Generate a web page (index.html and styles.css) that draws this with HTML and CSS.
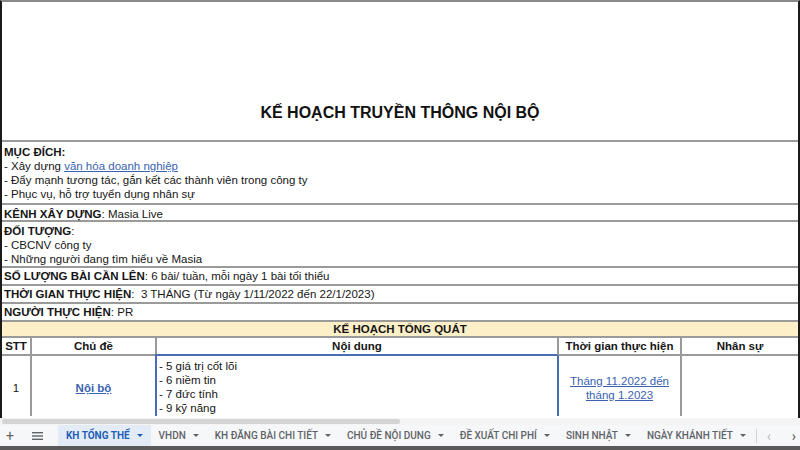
FILE: index.html
```html
<!DOCTYPE html>
<html lang="vi">
<head>
<meta charset="utf-8">
<title>Kế hoạch truyền thông nội bộ</title>
<link rel="stylesheet" href="styles.css">
</head>
<body>
<div class="page">
  <div class="sheet">
    <div class="title">KẾ HOẠCH TRUYỀN THÔNG NỘI BỘ</div>
    <div class="sec purpose">
      <div><b>MỤC ĐÍCH:</b></div>
      <div>- Xây dựng <span class="link">văn hóa doanh nghiệp</span></div>
      <div>- Đẩy mạnh tương tác, gắn kết các thành viên trong công ty</div>
      <div>- Phục vụ, hỗ trợ tuyển dụng nhân sự</div>
    </div>
    <div class="sec single tall"><b>KÊNH XÂY DỰNG</b>: Masia Live</div>
    <div class="sec target">
      <div><b>ĐỐI TƯỢNG</b>:</div>
      <div>- CBCNV công ty</div>
      <div>- Những người đang tìm hiểu về Masia</div>
    </div>
    <div class="sec single"><b>SỐ LƯỢNG BÀI CẦN LÊN</b>: 6 bài/ tuần, mỗi ngày 1 bài tối thiểu</div>
    <div class="sec single"><b>THỜI GIAN THỰC HIỆN</b>:&nbsp; 3 THÁNG (Từ ngày 1/11/2022 đến 22/1/2023)</div>
    <div class="sec single"><b>NGƯỜI THỰC HIỆN</b>: PR</div>
    <div class="sec yellow">KẾ HOẠCH TỔNG QUÁT</div>
    <div class="grid head">
      <div class="cell first">STT</div>
      <div class="cell">Chủ đề</div>
      <div class="cell">Nội dung</div>
      <div class="cell">Thời gian thực hiện</div>
      <div class="cell">Nhân sự</div>
    </div>
    <div class="grid data">
      <div class="cell first center">1</div>
      <div class="cell center"><span class="link bold">Nội bộ</span></div>
      <div class="cell selected">
        <div>- 5 giá trị cốt lõi</div>
        <div>- 6 niềm tin</div>
        <div>- 7 đức tính</div>
        <div>- 9 kỹ năng</div>
      </div>
      <div class="cell center after-sel"><span class="link">Tháng 11.2022 đến<br>tháng 1.2023</span></div>
      <div class="cell"></div>
    </div>
  </div>
  <div class="hscroll"><div class="thumb"></div></div>
  <div class="tabs">
    <span class="tool plus">+</span>
    <span class="tool menu"><svg width="11" height="8" viewBox="0 0 11 8"><rect x="0" y="0" width="11" height="1.4" fill="#5f6368"/><rect x="0" y="3.3" width="11" height="1.4" fill="#5f6368"/><rect x="0" y="6.6" width="11" height="1.4" fill="#5f6368"/></svg></span>
    <span class="tab active">KH TỔNG THỂ<i class="caret"></i></span>
    <span class="tab">VHDN<i class="caret"></i></span>
    <span class="tab">KH ĐĂNG BÀI CHI TIẾT<i class="caret"></i></span>
    <span class="tab">CHỦ ĐỀ NỘI DUNG<i class="caret"></i></span>
    <span class="tab">ĐỀ XUẤT CHI PHÍ<i class="caret"></i></span>
    <span class="tab">SINH NHẬT<i class="caret"></i></span>
    <span class="tab">NGÀY KHÁNH TIẾT<i class="caret"></i></span>
    <span class="divider"></span>
    <span class="nav prev">‹</span>
    <span class="nav next">›</span>
  </div>
  <div class="bottom"></div>
</div>
</body>
</html>
```

FILE: styles.css
```css
html, body {
  margin: 0;
  padding: 0;
  background: #fff;
}
body {
  width: 800px;
  height: 450px;
  overflow: hidden;
  font-family: "Liberation Sans", Arial, sans-serif;
  font-size: 11.5px;
  color: #161616;
}
.page {
  width: 800px;
  height: 450px;
  display: flex;
  flex-direction: column;
}
.sheet {
  height: 418px;
  box-sizing: border-box;
  border-top: 2px solid #8a8a8a;
  border-left: 2px solid #1a1a1a;
  border-right: 2px solid #1a1a1a;
  overflow: hidden;
  flex: none;
}
.title {
  height: 138px;
  box-sizing: border-box;
  padding-top: 101px;
  line-height: 20px;
  font-size: 16px;
  font-weight: bold;
  text-align: center;
  color: #111;
}
.sec {
  border-top: 2px solid #9a9a9a;
  padding: 0 2px;
}
.purpose {
  height: 58px;
  padding-top: 3px;
  line-height: 14px;
}
.single {
  height: 16px;
  line-height: 16px;
}
.single.tall {
  height: 14px;
  padding-top: 1px;
  line-height: 16px;
}
.target {
  height: 42px;
  padding-top: 2px;
  line-height: 14px;
}
.yellow {
  height: 14px;
  line-height: 15px;
  background: #fdefc7;
  text-align: center;
  font-weight: bold;
}
.link {
  color: #3a62b0;
  text-decoration: underline;
}
.bold {
  font-weight: bold;
}
.grid {
  display: grid;
  grid-template-columns: 28px 125px 402px 123px 118px;
}
.cell {
  border-top: 2px solid #9a9a9a;
  border-left: 2px solid #9a9a9a;
  box-sizing: border-box;
}
.cell.first {
  border-left: none;
}
.head .cell {
  height: 18px;
  line-height: 16px;
  text-align: center;
  font-weight: bold;
}
.data .cell {
  height: 62px;
}
.data .center {
  display: flex;
  align-items: center;
  justify-content: center;
  text-align: center;
  line-height: 14px;
  padding-top: 3px;
}
.data .selected {
  border-top-color: #4a6cb4;
  border-left-color: #4a6cb4;
  padding: 3px 2px 0;
  line-height: 14px;
}
.data .after-sel {
  border-left-color: #4a6cb4;
}
.hscroll {
  height: 7px;
  background: #f4f4f4;
  display: flex;
  align-items: center;
  flex: none;
}
.thumb {
  width: 398px;
  height: 5px;
  margin-left: 2px;
  background: #d4d4d4;
  border-radius: 2px;
}
.tabs {
  height: 21px;
  background: #f6f7f8;
  display: flex;
  align-items: stretch;
  font-family: Roboto, "Liberation Sans", Arial, sans-serif;
  font-size: 10px;
  font-weight: 500;
  color: #5f6368;
  flex: none;
  overflow: hidden;
}
.tabs > * {
  flex: none;
}
.tool {
  display: flex;
  align-items: center;
  justify-content: center;
}
.plus {
  width: 20px;
  font-size: 14px;
  font-weight: 400;
  color: #666;
}
.menu {
  width: 34px;
}
.tab {
  display: flex;
  align-items: center;
  padding: 0 8px;
  gap: 7px;
  white-space: nowrap;
}
.tab.active {
  background: #e3ebf7;
  color: #1f5fb8;
  font-weight: 700;
  margin-left: 4px;
}
.caret {
  width: 0;
  height: 0;
  border-left: 3px solid transparent;
  border-right: 3px solid transparent;
  border-top: 3px solid currentColor;
}
.divider {
  width: 1px;
  background: #d0d0d0;
  margin: 4px 0 3px 2px;
}
.nav {
  display: flex;
  align-items: center;
  justify-content: center;
  font-size: 14px;
  font-weight: 400;
}
.prev {
  width: 24px;
  color: #bbb;
}
.next {
  width: 26px;
  color: #555;
}
.bottom {
  height: 4px;
  background: #5a5a5a;
  flex: none;
}
```
